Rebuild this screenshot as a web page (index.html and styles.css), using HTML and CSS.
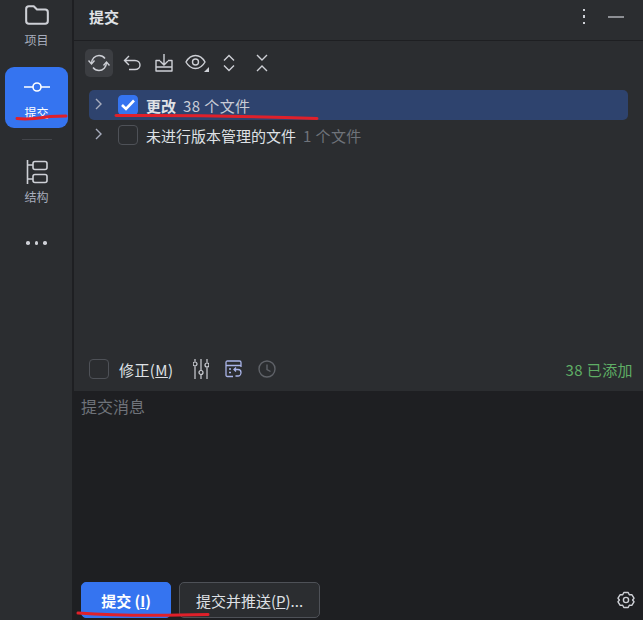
FILE: index.html
```html
<!DOCTYPE html>
<html>
<head>
  <title>提交</title>
  <link rel="stylesheet" href="styles.css">
</head>
<body>
  <div class="app">
    <nav class="sidebar">
      <div class="nav-item nav-project">
        <svg class="nav-icon" width="26" height="22" viewBox="0 0 24 20" fill="none" stroke="#ced0d6" stroke-width="1.900">
          <path d="M2 4.500C2 3 3 2 4.500 2H9l3 3h7.500C21 5 22 6 22 7.500V15.500C22 17 21 18 19.500 18H4.500C3 18 2 17 2 15.500Z" stroke-linejoin="round"/>
        </svg>
        <span>项目</span>
      </div>
      <div class="nav-item nav-active">
        <svg class="nav-icon" width="26" height="12" viewBox="0 0 26 12" fill="none" stroke="#fff" stroke-width="1.600">
          <circle cx="13" cy="6" r="4"/>
          <path d="M0 6H9M17 6H26"/>
        </svg>
        <span>提交</span>
      </div>
      <div class="nav-sep"></div>
      <div class="nav-item nav-structure">
        <svg class="nav-icon" width="22" height="24" viewBox="0 0 22 24" fill="none" stroke="#ced0d6" stroke-width="1.600">
          <path d="M1.500 0V24M1.500 5H7M1.500 19H7"/>
          <rect x="7" y="1.500" width="14" height="8" rx="2"/>
          <rect x="7" y="14.500" width="14" height="8" rx="2"/>
        </svg>
        <span>结构</span>
      </div>
      <div class="nav-more"><i></i><i></i><i></i></div>
    </nav>

    <main class="panel">
      <header class="header">
        <span class="title">提交</span>
        <div class="header-actions">
          <div class="kebab"><i></i><i></i><i></i></div>
          <div class="minimize"></div>
        </div>
      </header>

      <div class="toolbar">
        <button class="tool tool-on">
          <svg width="22" height="18" viewBox="0 0 22 18" fill="none" stroke="#ced0d6" stroke-width="1.400">
            <path d="M3.500 9.500C3.500 5 7 1.500 11 1.500C13.500 1.500 15.500 2.500 17 4.500"/>
            <path d="M18.500 8.500C18.500 13 15 16.500 11 16.500C8.500 16.500 6.500 15.500 5 13.500"/>
            <path d="M0.500 6.500L3.500 10L6.500 6.500M15.500 11.500L18.500 8L21.500 11.500"/>
          </svg>
        </button>
        <button class="tool">
          <svg width="18" height="16" viewBox="0 0 18 16" fill="none" stroke="#ced0d6" stroke-width="1.400">
            <path d="M6 1L1.500 5.500L6 10M1.500 5.500H12C15 5.500 17 7.500 17 10C17 12.500 15 14.500 12 14.500H6"/>
          </svg>
        </button>
        <button class="tool">
          <svg width="18" height="18" viewBox="0 0 18 18" fill="none" stroke="#ced0d6" stroke-width="1.400">
            <path d="M9 0V10.500M5 7L9 11L13 7"/>
            <path d="M5 6.500H1V17H17V6.500H13M1 13H17" stroke-linejoin="round"/>
          </svg>
        </button>
        <button class="tool">
          <svg width="24" height="18" viewBox="0 0 24 18" fill="none" stroke="#ced0d6" stroke-width="1.400">
            <path d="M1 8C3.500 3.500 7 1.500 10.500 1.500C14 1.500 17.500 3.500 20 8C17.500 12.500 14 14.500 10.500 14.500C7 14.500 3.500 12.500 1 8Z"/>
            <circle cx="10.500" cy="8" r="3"/>
            <path d="M24 13V18H19Z" fill="#ced0d6" stroke="none"/>
          </svg>
        </button>
        <button class="tool">
          <svg width="14" height="18" viewBox="0 0 14 18" fill="none" stroke="#ced0d6" stroke-width="1.400">
            <path d="M2 6.500L7 1.500L12 6.500M2 11.500L7 16.500L12 11.500"/>
          </svg>
        </button>
        <button class="tool">
          <svg width="14" height="18" viewBox="0 0 14 18" fill="none" stroke="#ced0d6" stroke-width="1.400">
            <path d="M2 1L7 6L12 1M2 17L7 12L12 17"/>
          </svg>
        </button>
      </div>

      <div class="tree">
        <div class="tree-row tree-row-on">
          <svg class="chevron" width="7" height="12" viewBox="0 0 7 12" fill="none" stroke="#a8adbd" stroke-width="1.400"><path d="M1 1L6 6L1 11"/></svg>
          <span class="check check-on">
            <svg width="14" height="12" viewBox="0 0 14 12" fill="none" stroke="#fff" stroke-width="2.600"><path d="M1 6L5 10L13 1.500"/></svg>
          </span>
          <span class="tree-name tree-name-bold">更改</span>
          <span class="tree-count">38 个文件</span>
        </div>
        <div class="tree-row">
          <svg class="chevron" width="7" height="12" viewBox="0 0 7 12" fill="none" stroke="#a8adbd" stroke-width="1.400"><path d="M1 1L6 6L1 11"/></svg>
          <span class="check"></span>
          <span class="tree-name">未进行版本管理的文件</span>
          <span class="tree-count tree-count-dim">1 个文件</span>
        </div>
      </div>

      <div class="options">
        <span class="check"></span>
        <span class="amend">修正(<u>M</u>)</span>
        <svg class="opt-icon" width="16" height="20" viewBox="0 0 16 20" fill="none" stroke="#ced0d6" stroke-width="1.200">
          <path d="M2 0V2.500M2 7.500V20M8 0V11M8 16V20M14 0V3.500M14 8.500V20"/>
          <circle cx="2" cy="5" r="2"/><circle cx="8" cy="13.500" r="2"/><circle cx="14" cy="6" r="2"/>
        </svg>
        <svg class="opt-icon" width="17" height="18" viewBox="0 0 17 18" fill="none" stroke="#a9b4e8" stroke-width="1.300">
          <path d="M8 16.500H2.500C1.500 16.500 1 16 1 15V2.500C1 1.500 1.500 1 2.500 1H14.500C15.500 1 16 1.500 16 2.500V7M1 5.500H16M4 9H6M4 12.500H6"/>
          <path d="M11 7.500L9 9.500L11 11.500M9 9.500H13C15 9.500 16 11 16 12.500C16 14.500 14.500 16 13 16H10.500"/>
        </svg>
        <svg class="opt-icon" width="18" height="18" viewBox="0 0 18 18" fill="none" stroke="#5f6268" stroke-width="1.400">
          <circle cx="9" cy="9" r="8"/><path d="M9 4.500V9.500L12.500 11.500"/>
        </svg>
        <span class="added">38 已添加</span>
      </div>

      <div class="editor">
        <div class="placeholder">提交消息</div>
        <div class="actions">
          <button class="btn btn-primary">提交 (<u>I</u>)</button>
          <button class="btn">提交并推送(<u>P</u>)...</button>
          <svg class="gear" width="18" height="18" viewBox="0 0 18 18" fill="none" stroke="#ced0d6" stroke-width="1.400">
            <path d="M6.800 1.500H11.200L12.300 3.700L14.800 3.600L17 7.200L15.600 9L17 10.800L14.800 14.400L12.300 14.300L11.200 16.500H6.800L5.700 14.300L3.200 14.400L1 10.800L2.400 9L1 7.200L3.200 3.600L5.700 3.700Z" stroke-linejoin="round"/>
            <circle cx="9" cy="9" r="2.600"/>
          </svg>
        </div>
      </div>
    </main>
  </div>

  <!-- red pen marks drawn over the screenshot -->
  <svg class="marks" width="643" height="620" viewBox="0 0 643 620" fill="none" stroke="#e0202a" stroke-width="3" stroke-linecap="round">
    <path d="M17 118.500C30 120 40 118 50 116.500C57 116 62 116 66 116"/>
    <path d="M116 115.500C180 115 260 116.500 317 118.500"/>
    <path d="M78 613C120 616 170 615.500 208 614.500"/>
  </svg>
</body>
</html>
```

FILE: styles.css
```css
* {
  box-sizing: border-box;
}

body {
  margin: 0;
  background-color: #2b2d30;
  font-family: "Noto Sans CJK SC", "Noto Sans", sans-serif;
  font-size: 15px;
  color: #dfe1e5;
  overflow: hidden;
}

.app {
  display: flex;
  width: 643px;
  height: 620px;
}

/* left tool strip */
.sidebar {
  width: 74px;
  flex-shrink: 0;
  display: flex;
  flex-direction: column;
  align-items: center;
  padding-left: 1px;
  border-right: 2px solid #1e1f22;
  font-size: 12px;
  color: #a8adbd;
}

.nav-item {
  display: flex;
  flex-direction: column;
  align-items: center;
  width: 63px;
  line-height: 16px;
}

.nav-project {
  padding-top: 4px;
  gap: 6px;
}

.nav-active {
  height: 61px;
  margin-top: 19px;
  padding-top: 14px;
  gap: 12px;
  background-color: #3574f0;
  border-radius: 9px;
  color: #fff;
}

.nav-sep {
  width: 30px;
  height: 1px;
  margin-top: 11px;
  background-color: #43454a;
}

.nav-structure {
  margin-top: 20px;
  gap: 5px;
}

.nav-more {
  display: flex;
  gap: 5px;
  margin-top: 36px;
}

.nav-more i {
  width: 3.500px;
  height: 3.500px;
  background-color: #ced0d6;
  border-radius: 50%;
}

/* main panel */
.panel {
  flex: 1;
  display: flex;
  flex-direction: column;
  min-width: 0;
}

.header {
  height: 41px;
  flex-shrink: 0;
  display: flex;
  align-items: center;
  justify-content: space-between;
  padding: 0 19px 7px 15px;
  border-bottom: 1px solid #1e1f22;
}

.title {
  font-size: 15px;
  font-weight: 700;
}

.header-actions {
  display: flex;
  align-items: center;
  gap: 23px;
}

.kebab {
  display: flex;
  flex-direction: column;
  gap: 4px;
}

.kebab i {
  width: 2.500px;
  height: 2.500px;
  background-color: #ced0d6;
}

.minimize {
  width: 16px;
  height: 2px;
  background-color: #8d8f94;
}

.toolbar {
  height: 49px;
  flex-shrink: 0;
  display: flex;
  align-items: flex-start;
  gap: 4.500px;
  padding: 8px 0 0 11px;
}

.tool {
  width: 28px;
  height: 28px;
  padding: 0;
  display: flex;
  align-items: center;
  justify-content: center;
  background: none;
  border: none;
  border-radius: 5px;
}

.tool-on {
  background-color: #3c3e42;
}

.tree {
  flex: 1;
  padding: 0 15px;
}

.tree-row {
  display: flex;
  align-items: center;
  height: 30px;
  padding-left: 6px;
  border-radius: 5px;
}

.tree-row-on {
  background-color: #2e436e;
}

.chevron {
  margin-right: 16px;
  margin-top: -2px;
}

.check {
  width: 20px;
  height: 20px;
  flex-shrink: 0;
  display: flex;
  align-items: center;
  justify-content: center;
  border: 1.500px solid #4e5157;
  border-radius: 4px;
}

.check-on {
  background-color: #3574f0;
  border-color: #3574f0;
}

.tree-name {
  margin-left: 8px;
  white-space: nowrap;
}

.tree-name-bold {
  font-weight: 700;
}

.tree-count {
  margin-left: 7px;
  white-space: nowrap;
  letter-spacing: 0.400px;
  color: #c9ccd6;
}

.tree-count-dim {
  color: #6f737a;
}

.options {
  height: 38px;
  flex-shrink: 0;
  display: flex;
  align-items: center;
  padding: 0 10px 6px 15px;
}

.amend {
  margin-left: 10px;
  margin-right: 20px;
  letter-spacing: 0.400px;
}

.opt-icon {
  margin-right: 16px;
}

.added {
  margin-left: auto;
  letter-spacing: 0.400px;
  color: #5fad65;
}

.editor {
  flex: 0 0 229px;
  display: flex;
  flex-direction: column;
  justify-content: space-between;
  background-color: #1e1f22;
}

.placeholder {
  padding: 3px 7px;
  font-size: 16px;
  color: #6f737a;
}

.actions {
  display: flex;
  align-items: center;
  gap: 8px;
  padding: 0 7px 2px;
}

.btn {
  width: 141px;
  height: 36px;
  padding: 0;
  font-family: inherit;
  font-size: 15px;
  color: #dfe1e5;
  background-color: #2b2d30;
  border: 1px solid #4e5157;
  border-radius: 5px;
}

.btn-primary {
  width: 90px;
  background-color: #3574f0;
  border-color: #3574f0;
  font-weight: 700;
  color: #fff;
}

.gear {
  margin-left: auto;
  margin-right: 1px;
}

.marks {
  position: absolute;
  left: 0;
  top: 0;
  pointer-events: none;
}
```
